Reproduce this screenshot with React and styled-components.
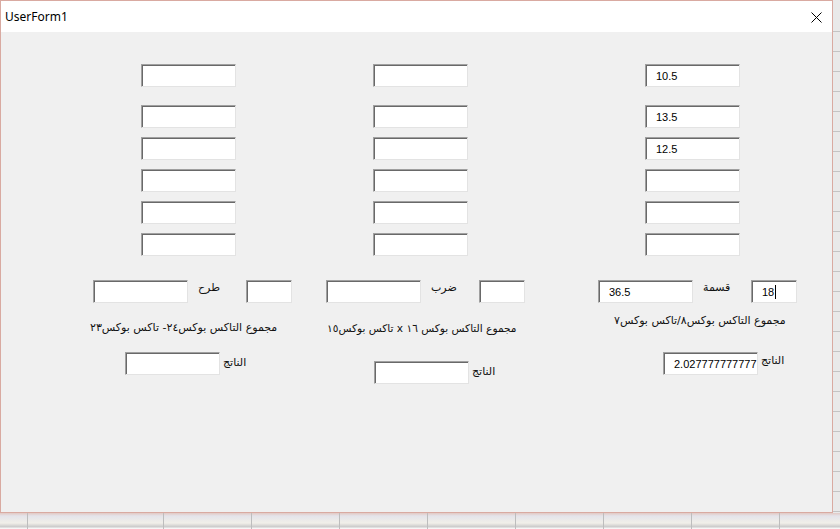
import React from 'react';
import styled, { createGlobalStyle } from 'styled-components';

const Global = createGlobalStyle`
  html, body {
    margin: 0;
    padding: 0;
    width: 840px;
    height: 529px;
    overflow: hidden;
    background: #f3f3f3;
  }
`;

const Desk = styled.div`
  width: 840px;
  height: 529px;
  display: flex;
  flex-direction: column;
`;

const Top = styled.div`
  display: flex;
`;

const SideStrip = styled.div`
  flex: 1;
  background-color: #e9e9e9;
  background-image: repeating-linear-gradient(
    to bottom,
    transparent 0 19px,
    #c4c4c4 19px 20px
  );
  background-position: 0 12px;
`;

const BottomStrip = styled.div`
  flex: 1;
  background-image:
    repeating-linear-gradient(to right, transparent 0 87px, #bdbdbd 87px 88px),
    linear-gradient(to bottom, #e2c9c4 0, #e4e4ea 3px, #f1efe9 10px, #c9c9c9 14px, #f6f6f6 15px);
  background-position: 76px 0, 0 0;
`;

const Window = styled.div`
  width: 831px;
  height: 511px;
  border: 1px solid #d9aaa1;
  background: #f0f0f0;
  display: flex;
  flex-direction: column;
`;

const TitleBar = styled.div`
  height: 31px;
  background: #ffffff;
  display: flex;
  align-items: center;
  justify-content: space-between;
  padding: 0 10px 0 4px;
  font-family: "Noto Sans", "Open Sans", sans-serif;
  font-size: 12px;
  color: #000;
`;

const Close = styled.svg`
  width: 11px;
  height: 11px;
  margin-top: 1px;
`;

const Body = styled.div`
  flex: 1;
  padding-top: 32px;
`;

const Columns = styled.div`
  display: flex;
  padding-left: 140px;
`;

const Column = styled.div`
  display: flex;
  flex-direction: column;
  gap: 9px;
  margin-left: ${p => p.$offset || 0}px;
  & > :first-child {
    margin-bottom: 9px;
  }
`;

const TextBox = styled.div`
  box-sizing: border-box;
  width: ${p => p.$w || 95}px;
  height: 23px;
  background: #fff;
  border-top: 1px solid #a0a0a0;
  border-left: 1px solid #a0a0a0;
  border-right: 1px solid #e3e3e3;
  border-bottom: 1px solid #e3e3e3;
  box-shadow: inset 1px 1px 0 #696969;
  padding-left: 10px;
  display: flex;
  align-items: center;
  font-family: "Liberation Sans", Arial, sans-serif;
  font-size: 11px;
  color: #000;
  white-space: nowrap;
  overflow: hidden;
  flex-shrink: 0;
`;

const Caret = styled.span`
  display: inline-block;
  width: 1px;
  height: 14px;
  background: #000;
  margin-left: 1px;
`;

const Groups = styled.div`
  display: flex;
  padding-left: 92px;
  margin-top: 24px;
`;

const Group = styled.div`
  width: 199px;
  margin-left: ${p => p.$offset || 0}px;
  display: flex;
  flex-direction: column;
`;

const InputRow = styled.div`
  display: flex;
  align-items: flex-start;
`;

const OpLabel = styled.div`
  margin-left: 10px;
  padding-top: 1px;
  font-family: "DejaVu Sans", sans-serif;
  font-size: 11px;
  line-height: 13px;
  color: #111;
`;

const Spacer = styled.div`
  flex: 1;
`;

const Caption = styled.div`
  direction: rtl;
  align-self: flex-start;
  margin-top: ${p => p.$top}px;
  margin-left: ${p => p.$left}px;
  font-family: "DejaVu Sans", sans-serif;
  font-size: ${p => p.$size || 11}px;
  line-height: 13px;
  color: #111;
  white-space: nowrap;
`;

const ResultRow = styled.div`
  display: flex;
  align-items: flex-start;
  margin-top: ${p => p.$top}px;
  margin-left: ${p => p.$left}px;
`;

const ResultLabel = styled.div`
  margin-left: 3px;
  padding-top: ${p => p.$pad || 2}px;
  font-family: "DejaVu Sans", sans-serif;
  font-size: 11px;
  line-height: 13px;
  color: #111;
`;

const columns = [
  { offset: 0, values: ['', '', '', '', '', ''] },
  { offset: 137, values: ['', '', '', '', '', ''] },
  { offset: 177, values: ['10.5', '13.5', '12.5', '', '', ''] },
];

const groups = [
  {
    offset: 0, op: 'طرح', wide: '', small: '',
    caption: 'مجموع التاكس بوكس٢٤- تاكس بوكس٢٣', capTop: 18, capLeft: -3, capSize: 11,
    resTop: 18, resLeft: 32, result: '', labelPad: 4,
  },
  {
    offset: 34, op: 'ضرب', wide: '', small: '',
    caption: 'مجموع التاكس بوكس ١٦ x تاكس بوكس١٥', capTop: 19, capLeft: 1, capSize: 10.6,
    resTop: 26, resLeft: 48, result: '', labelPad: 4,
  },
  {
    offset: 73, op: 'قسمة', wide: '36.5', small: '18', caret: true,
    caption: 'مجموع التاكس بوكس٨/تاكس بوكس٧', capTop: 11, capLeft: 16, capSize: 11,
    resTop: 25, resLeft: 65, result: '2.027777777777', labelPad: 2,
  },
];

export default function App() {
  return (
    <Desk>
      <Global />
      <Top>
        <Window>
          <TitleBar>
            <span>UserForm1</span>
            <Close viewBox="0 0 11 11">
              <path d="M0.5 0.5 L10.5 10.5 M10.5 0.5 L0.5 10.5" stroke="#000" strokeWidth="1" fill="none" />
            </Close>
          </TitleBar>
          <Body>
            <Columns>
              {columns.map((col, i) => (
                <Column key={i} $offset={col.offset}>
                  {col.values.map((v, j) => (
                    <TextBox key={j}>{v}</TextBox>
                  ))}
                </Column>
              ))}
            </Columns>
            <Groups>
              {groups.map((g, i) => (
                <Group key={i} $offset={g.offset}>
                  <InputRow>
                    <TextBox>{g.wide}</TextBox>
                    <OpLabel>{g.op}</OpLabel>
                    <Spacer />
                    <TextBox $w={46}>
                      {g.small}
                      {g.caret && <Caret />}
                    </TextBox>
                  </InputRow>
                  <Caption $top={g.capTop} $left={g.capLeft} $size={g.capSize}>{g.caption}</Caption>
                  <ResultRow $top={g.resTop} $left={g.resLeft}>
                    <TextBox>{g.result}</TextBox>
                    <ResultLabel $pad={g.labelPad}>الناتج</ResultLabel>
                  </ResultRow>
                </Group>
              ))}
            </Groups>
          </Body>
        </Window>
        <SideStrip />
      </Top>
      <BottomStrip />
    </Desk>
  );
}
